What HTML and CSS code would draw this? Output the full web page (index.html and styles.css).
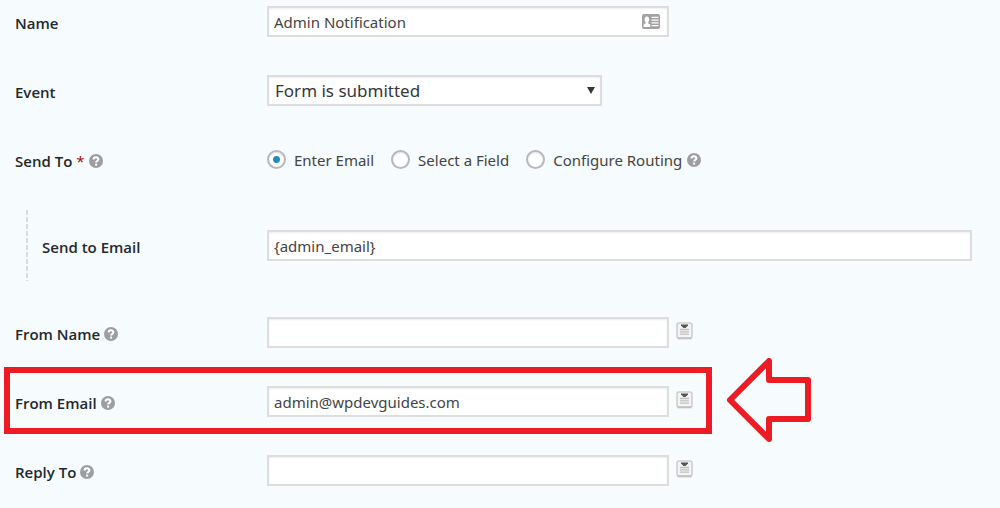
FILE: index.html
```html
<!doctype html>
<html lang="en">
<head>
  <meta charset="utf-8">
  <title>Edit Notification</title>
  <link rel="stylesheet" href="styles.css">
</head>
<body>
  <svg class="sprite" aria-hidden="true">
    <symbol id="help" viewBox="0 0 14 14">
      <circle cx="7" cy="7" r="7" fill="#9c9ea0"/>
      <path d="M4.6 5.5C4.6 2.6 9.4 2.7 9.4 5.3C9.4 6.9 7.1 6.8 7.1 8.6" fill="none" stroke="#fff" stroke-width="2"/>
      <rect x="6.1" y="9.6" width="2" height="2" fill="#fff"/>
    </symbol>
    <symbol id="merge" viewBox="0 0 17 18">
      <rect x="1" y="1" width="15" height="15" rx="2" fill="#f4f4f4" stroke="#cfcfcf" stroke-width="1.6"/>
      <path d="M1.5 16.3H15.5" stroke="#c2c2c2" stroke-width="2"/>
      <path d="M5 2.5H12V3.5L9.5 6H7.5L5 3.5Z" fill="#555"/>
      <path d="M4 7.5H13M4 9.8H13M4 12.1H13" stroke="#c0c0c0" stroke-width="1.3"/>
    </symbol>
  </svg>

  <form class="notification">
    <div class="row">
      <div class="label"><label for="name">Name</label></div>
      <div class="field">
        <div class="medium">
          <input class="text" type="text" id="name" value="Admin Notification">
          <svg class="card-icon" viewBox="0 0 18 15" aria-hidden="true">
            <rect width="18" height="15" rx="2" fill="#a2a2a2"/>
            <path d="M1.6 13V10.4L3.6 9.2V8.2C2 6.5 2.2 2.4 4.9 2.4S7.8 6.5 6.2 8.2V9.2L8.2 10.4V13Z" fill="#fff"/>
            <path d="M9.5 3.3H16.5M9.5 6.1H16.5M9.5 8.9H16.5M9.5 11.7H16.5" stroke="#fff" stroke-width="1.3"/>
          </svg>
        </div>
      </div>
    </div>

    <div class="row">
      <div class="label"><label for="event">Event</label></div>
      <div class="field">
        <div class="select">
          <select id="event">
            <option>Form is submitted</option>
          </select>
        </div>
      </div>
    </div>

    <div class="row">
      <div class="label" id="send-to">Send To <span class="required">*</span> <svg class="help"><use href="#help"/></svg></div>
      <div class="field choices" role="radiogroup" aria-labelledby="send-to">
        <label class="choice"><input type="radio" name="send_to" checked> Enter Email</label>
        <label class="choice"><input type="radio" name="send_to"> Select a Field</label>
        <label class="choice"><input type="radio" name="send_to"> Configure Routing</label>
        <svg class="help"><use href="#help"/></svg>
      </div>
    </div>

    <div class="row child">
      <div class="label"><label for="to-email">Send to Email</label></div>
      <div class="field">
        <input class="text" type="text" id="to-email" value="{admin_email}">
      </div>
    </div>

    <div class="row">
      <div class="label"><label for="from-name">From Name</label> <svg class="help"><use href="#help"/></svg></div>
      <div class="field">
        <div class="medium"><input class="text" type="text" id="from-name"></div>
        <button class="merge" type="button" aria-label="Insert merge tag"><svg><use href="#merge"/></svg></button>
      </div>
    </div>

    <div class="row marked">
      <div class="label"><label for="from-email">From Email</label> <svg class="help"><use href="#help"/></svg></div>
      <div class="field">
        <div class="medium"><input class="text" type="text" id="from-email" value="admin@wpdevguides.com"></div>
        <button class="merge" type="button" aria-label="Insert merge tag"><svg><use href="#merge"/></svg></button>
      </div>
      <svg class="arrow" viewBox="0 0 84 84" aria-hidden="true">
        <path d="M3 42L42 3V22H81V61H42V81Z" fill="none" stroke="#ed1c24" stroke-width="6" stroke-linejoin="round"/>
      </svg>
    </div>

    <div class="row">
      <div class="label"><label for="reply-to">Reply To</label> <svg class="help"><use href="#help"/></svg></div>
      <div class="field">
        <div class="medium"><input class="text" type="text" id="reply-to"></div>
        <button class="merge" type="button" aria-label="Insert merge tag"><svg><use href="#merge"/></svg></button>
      </div>
    </div>
  </form>
</body>
</html>
```

FILE: styles.css
```css
*, *:before, *:after {
  box-sizing: border-box;
}
body {
  margin: 0;
  background: #f6fbfe;
  color: #444;
  font: 15px/20px "Noto Sans", "Open Sans", sans-serif;
}
.sprite {
  display: none;
}
.notification {
  display: flex;
  flex-direction: column;
  gap: 38px;
  padding: 6px 28px 22px 15px;
}
.row {
  display: flex;
  align-items: center;
  min-height: 31px;
}
.label {
  display: flex;
  align-items: center;
  flex: none;
  gap: 4px;
  width: 252px;
  padding-top: 2px;
  color: #23282d;
  font-family: "Open Sans", "Noto Sans", sans-serif;
  font-weight: 600;
}
.required {
  color: #a00;
  font-weight: 400;
}
.help {
  flex: none;
  width: 14px;
  height: 14px;
}
.field {
  display: flex;
  align-items: center;
  flex: 1;
}
.medium {
  position: relative;
  width: 57%;
}
.text, select {
  display: block;
  width: 100%;
  height: 31px;
  margin: 0;
  padding: 0 5px;
  border: 2px solid #ddd;
  border-radius: 0;
  background: #fff;
  box-shadow: inset 0 1px 2px rgba(0,0,0,0.07);
  color: #444;
  font: inherit;
}
.card-icon {
  position: absolute;
  top: 8px;
  right: 9px;
  width: 18px;
  height: 15px;
}
.select {
  position: relative;
  width: 335px;
}
.select:after {
  content: "";
  position: absolute;
  top: 12px;
  right: 7px;
  border: 4px solid transparent;
  border-top: 7px solid #32373c;
  border-bottom: 0;
  pointer-events: none;
}
select {
  padding: 0 6px;
  color: #32373c;
  font-size: 17px;
  -webkit-appearance: none;
  appearance: none;
}

/* Send To radios */
.choices {
  gap: 5px;
}
.choice {
  display: flex;
  align-items: center;
  gap: 8px;
}
.choice + .choice {
  margin-left: 12px;
}
.choice input {
  width: 19px;
  height: 19px;
  margin: 0;
  border: 2px solid #b4b9be;
  border-radius: 50%;
  background: #fff;
  box-shadow: inset 0 1px 2px rgba(0,0,0,0.1);
  -webkit-appearance: none;
  appearance: none;
}
.choice input:checked {
  background: radial-gradient(circle, #1e8cbe 3px, #fff 4px);
}

/* Nested setting */
.child {
  min-height: 71px;
  margin: -3px 0 -2px 11px;
  background: repeating-linear-gradient(#d8dcdd 0 5px, transparent 5px 7px) left / 2px 100% no-repeat;
}
.child .label {
  width: 241px;
  padding-left: 16px;
}

.merge {
  margin: 0 0 4px 7px;
  padding: 0;
  border: 0;
  background: none;
}
.merge svg {
  display: block;
  width: 17px;
  height: 18px;
}

/* Red callout */
.marked {
  position: relative;
}
.marked:before {
  content: "";
  position: absolute;
  top: -19px;
  bottom: -17px;
  left: -11px;
  width: 708px;
  border: 6px solid #ed1c24;
  pointer-events: none;
}
.arrow {
  position: absolute;
  top: -28px;
  left: 712px;
  width: 84px;
  height: 84px;
}
```
